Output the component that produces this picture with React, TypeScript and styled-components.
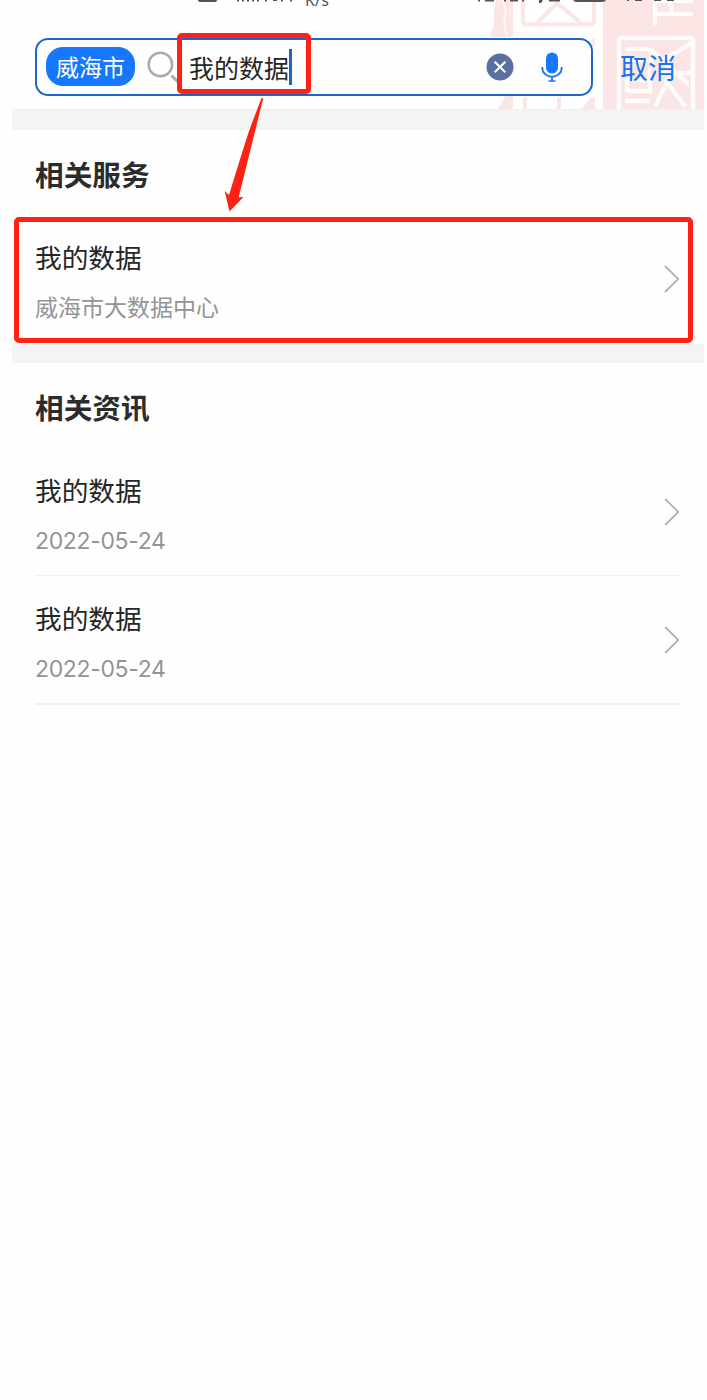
import React from "react";
import styled, { createGlobalStyle } from "styled-components";

const GlobalStyle = createGlobalStyle`
  * { box-sizing: border-box; }
  body {
    margin: 0;
    background: #fefefe;
    font-family: "Noto Sans CJK SC", sans-serif;
    color: #262626;
  }
`;

const Page = styled.main`
  position: relative;
  width: 707px;
  height: 1400px;
  padding: 0 3px 0 12px;
  overflow: hidden;
`;

const Header = styled.header`
  position: relative;
  height: 109px;
  padding: 38px 0 0 23px;
  display: flex;
  align-items: flex-start;
  overflow: hidden;
`;

const Seal = styled.svg`
  position: absolute;
  right: 0;
  top: 0;
`;

const StatusMarks = styled.svg`
  position: absolute;
  left: 0;
  top: 0;
`;

const Speed = styled.span`
  position: absolute;
  left: 293px;
  top: -9px;
  font: 16px/18px "Noto Sans", sans-serif;
  color: #555;
  letter-spacing: 0.2px;
`;

const SearchBox = styled.div`
  position: relative;
  width: 558px;
  height: 58px;
  border: 2px solid #1b68c8;
  border-radius: 13px;
  background: #fefefe;
  display: flex;
  align-items: center;
  padding: 0 28px 0 9px;
`;

const City = styled.span`
  width: 89px;
  height: 39px;
  margin-bottom: 1px;
  border-radius: 17px;
  background: #1677ff;
  color: #fff;
  font-size: 23px;
  line-height: 39px;
  text-align: center;
`;

const SearchGlyph = styled.svg`
  margin: 0 0 1px 12px;
`;

const Query = styled.span`
  margin: 0 0 1px 10px;
  font-size: 25px;
  line-height: 36px;
  white-space: nowrap;
`;

const Caret = styled.span`
  width: 3px;
  height: 36px;
  background: #1c65c8;
`;

const BoxActions = styled.div`
  margin-left: auto;
  display: flex;
  align-items: center;
  gap: 27px;
`;

const Cancel = styled.span`
  position: relative;
  margin-left: 27px;
  font-size: 28px;
  line-height: 59px;
  color: #1673ee;
`;

const Band = styled.div<{ $height: number }>`
  height: ${(p) => p.$height}px;
  background: #f4f4f4;
  border-top: 1px solid #f0f0f0;
`;

const Section = styled.section`
  padding: 0 23px;
`;

const Heading = styled.h2`
  margin: 0;
  height: 85px;
  font-size: 28.7px;
  font-weight: 700;
  line-height: 87px;
  color: #2c2c2c;
`;

const Row = styled.div<{ $line?: number }>`
  height: ${(p) => (p.$line ? 127 + p.$line : 129)}px;
  height: ${(p) => (p.$line === 2 ? 129 : p.$line === 1 ? 128 : 129)}px;
  border-bottom: ${(p) => p.$line || 0}px solid #f0f0f0;
  display: flex;
  align-items: flex-start;
  justify-content: space-between;
`;

const RowText = styled.div`
  padding-top: 22px;
`;

const Title = styled.div`
  font-size: 26.7px;
  line-height: 40px;
`;

const Detail = styled.div`
  margin-top: 11px;
  font-size: 23px;
  line-height: 36px;
  color: #949494;
`;

const DateText = styled(Detail)`
  margin-top: 13px;
  font-family: Inter, sans-serif;
  font-size: 23px;
  letter-spacing: -0.35px;
`;

const Arrow = styled.svg`
  margin: 49px 1px 0 0;
`;

const Frame = styled.div<{ $x: number; $y: number; $w: number; $h: number }>`
  position: absolute;
  left: ${(p) => p.$x}px;
  top: ${(p) => p.$y}px;
  width: ${(p) => p.$w}px;
  height: ${(p) => p.$h}px;
  border: 5px solid #ff2113;
  border-radius: 5px;
`;

const Pointer = styled.svg`
  position: absolute;
  left: 220px;
  top: 95px;
`;

const Chevron = () => (
  <Arrow width="16" height="30" viewBox="0 0 16 30" fill="none" stroke="#b3b3b3" strokeWidth="1.8">
    <path d="M1 2 L14.3 15 L1 28" />
  </Arrow>
);

const news = [
  { title: "我的数据", date: "2022-05-24" },
  { title: "我的数据", date: "2022-05-24" },
];

export default function App() {
  return (
    <Page>
      <GlobalStyle />
      <Header>
        <Seal width="224" height="109" viewBox="480 0 224 109" fill="none">
          <path d="M494 12 L496 0 H513 V37 H490 L494 24 Z" fill="#fce5e5" />
          <path d="M503 0 L506 12 L504 24 L507 37" stroke="#fff6f6" strokeWidth="2" />
          <path d="M523 0 V21 Q523 24.5 527 24.5 H590 Q594 24.5 594 20 V0" stroke="#fce5e5" strokeWidth="4" />
          <path d="M537 23 L557 3 L580 22" stroke="#fce5e5" strokeWidth="4" />
          <path d="M498 109 L506 95 H513 V109 Z M523 109 V97 H527 V109 Z M557 109 V97 H561 V109 Z M582 109 L590 98 H595 V109 Z M591 41 L595 37 V46 H592 Z" fill="#fce5e5" />
          <rect x="603" y="0" width="101" height="109" fill="#fbe5e5" />
          <g stroke="#fffcfb" strokeWidth="4.5" strokeLinecap="round" strokeLinejoin="round">
            <path d="M655 23 V1 M655 14 H691 M671 3 V13 M655 1 H691" />
            <path d="M619 112 V42 Q619 38 623 38 H689 Q693 38 693 42 V112" />
            <path d="M627 49 H646 Q651 49 651 55 V62 M627 60 H646 M652 51 L687 83 M690 44 L661 61 M627 70 V89 Q627 91 630 91 H650 V70 M627 80 H648 M627 101 H648 M672 71 L656 105 M666 81 L684 105 M661 73 H690" />
          </g>
        </Seal>
        <StatusMarks width="692" height="6" viewBox="12 0 692 6" fill="#555">
          <path d="M198 0 H217 Q217 2 214 2 H201 Q198 2 198 0 Z M573 0 H606 Q605 2 602 2 H577 Q574 2 573 0 Z" />
          <path d="M237 0h2v1.5h-2z M242 0h2v1.5h-2z M247 0h2v1.5h-2z M252 0h2v1.5h-2z M257 0h2v1.5h-2z M265 0h2v1.5h-2z M273 0h4v1h-4z M281 0h2v1.5h-2z M290 0h2v1.5h-2z M478 0h2v1.5h-2z M485 0h9v1.5h-9z M504 0h2v1.5h-2z M510 0h8v1.5h-8z M522 0h2v1.5h-2z M539 0l4 0-2 3h-2z M549 0h11v1.5h-11z M627 0h2v1h-2z M635 0h7v1h-7z M654 0h7v1h-7z M667 0h7v1h-7z" />
        </StatusMarks>
        <Speed>K/s</Speed>
        <SearchBox>
          <City>威海市</City>
          <SearchGlyph width="32" height="34" viewBox="0 0 32 34" fill="none" stroke="#aaa">
            <circle cx="13.4" cy="14.5" r="11.7" strokeWidth="2.5" />
            <path d="M24.5 25.5 L31 32" strokeWidth="3" />
          </SearchGlyph>
          <Query>我的数据</Query>
          <Caret />
          <BoxActions>
            <svg width="28" height="28" viewBox="0 0 28 28">
              <circle cx="14" cy="14" r="13.5" fill="#5971a2" />
              <path d="M8.7 8.7 L19.3 19.3 M19.3 8.7 L8.7 19.3" stroke="#fff" strokeWidth="2" />
            </svg>
            <svg width="22" height="30" viewBox="0 0 22 30" fill="none">
              <rect x="5" y="0.5" width="12" height="21" rx="6" fill="#1677ff" />
              <path d="M1.2 15 C1.2 28 20.8 28 20.8 15 M11 25 V29" stroke="#2979e8" strokeWidth="1.9" />
              <path d="M7.5 29 H14.5" stroke="#2979e8" strokeWidth="1.6" />
            </svg>
          </BoxActions>
        </SearchBox>
        <Cancel>取消</Cancel>
      </Header>
      <Band $height={21} />
      <Section>
        <Heading>相关服务</Heading>
        <Row>
          <RowText>
            <Title>我的数据</Title>
            <Detail>威海市大数据中心</Detail>
          </RowText>
          <Chevron />
        </Row>
      </Section>
      <Band $height={19} />
      <Section>
        <Heading>相关资讯</Heading>
        {news.map((item, i) => (
          <Row key={i} $line={i + 1}>
            <RowText>
              <Title>{item.title}</Title>
              <DateText>{item.date}</DateText>
            </RowText>
            <Chevron />
          </Row>
        ))}
      </Section>
      <Frame $x={177} $y={33} $w={134} $h={61} />
      <Frame $x={14} $y={217} $w={679} $h={126} />
      <Pointer width="50" height="120" viewBox="220 95 50 120">
        <path d="M261.5 98 L263.2 98.5 L238.7 197.3 L243.5 197 L229.5 211.5 L224.7 191 L229 195 Q240 159 249 131 Z" fill="#ff2113" />
      </Pointer>
    </Page>
  );
}
